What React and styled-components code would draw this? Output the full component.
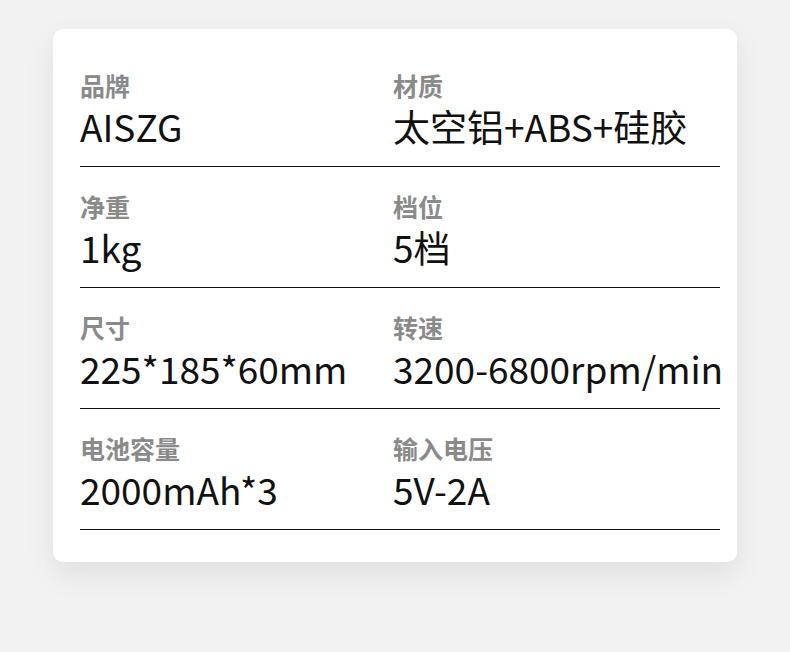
import React from "react";
import styled, { createGlobalStyle } from "styled-components";

const GlobalStyle = createGlobalStyle`
  html, body {
    margin: 0;
    padding: 0;
    background: #f2f2f2;
  }
  body {
    font-family: "Noto Sans CJK SC", "Noto Sans", sans-serif;
  }
`;

const specs = [
  ["品牌", "AISZG", "材质", "太空铝+ABS+硅胶"],
  ["净重", "1kg", "档位", "5档"],
  ["尺寸", "225*185*60mm", "转速", "3200-6800rpm/min"],
  ["电池容量", "2000mAh*3", "输入电压", "5V-2A"],
];

export const App = () => {
  return (
    <Page>
      <GlobalStyle />
      <Card>
        {specs.map(([l1, v1, l2, v2]) => (
          <Row key={l1}>
            <Cell>
              <Label>{l1}</Label>
              <Value>{v1}</Value>
            </Cell>
            <Cell>
              <Label>{l2}</Label>
              <Value>{v2}</Value>
            </Cell>
          </Row>
        ))}
      </Card>
    </Page>
  );
};

const Page = styled.main`
  min-height: 652px;
  box-sizing: border-box;
  padding: 29px 53px;
`;

const Card = styled.section`
  background: #fff;
  border-radius: 10px;
  box-shadow: 0 12px 30px rgba(0, 0, 0, 0.08);
  padding: 17px 17px 32px 27px;
`;

const Row = styled.div`
  display: grid;
  grid-template-columns: 313px 1fr;
  height: 121px;
  box-sizing: border-box;
  padding-top: 27px;
  border-bottom: 1px solid #111;
`;

const Cell = styled.div`
  display: flex;
  flex-direction: column;
  white-space: nowrap;
`;

const Label = styled.div`
  font-size: 25px;
  line-height: 25px;
  font-weight: 700;
  color: #8a8a8a;
`;

const Value = styled.div`
  margin-top: 10px;
  font-size: 37px;
  line-height: 37px;
  font-weight: 400;
  color: #111;
`;

export default App;
